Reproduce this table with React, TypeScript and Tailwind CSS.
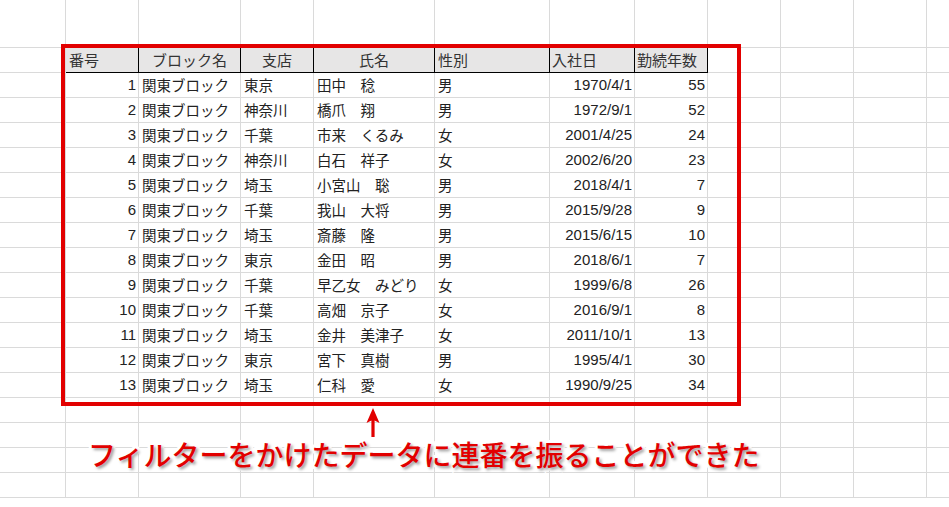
import React from 'react';

type Row = [number, string, string, string, string, string, number];

const rows: Row[] = [
  [1, '関東ブロック', '東京', '田中　稔', '男', '1970/4/1', 55],
  [2, '関東ブロック', '神奈川', '橋爪　翔', '男', '1972/9/1', 52],
  [3, '関東ブロック', '千葉', '市来　くるみ', '女', '2001/4/25', 24],
  [4, '関東ブロック', '神奈川', '白石　祥子', '女', '2002/6/20', 23],
  [5, '関東ブロック', '埼玉', '小宮山　聡', '男', '2018/4/1', 7],
  [6, '関東ブロック', '千葉', '我山　大将', '男', '2015/9/28', 9],
  [7, '関東ブロック', '埼玉', '斎藤　隆', '男', '2015/6/15', 10],
  [8, '関東ブロック', '東京', '金田　昭', '男', '2018/6/1', 7],
  [9, '関東ブロック', '千葉', '早乙女　みどり', '女', '1999/6/8', 26],
  [10, '関東ブロック', '千葉', '高畑　京子', '女', '2016/9/1', 8],
  [11, '関東ブロック', '埼玉', '金井　美津子', '女', '2011/10/1', 13],
  [12, '関東ブロック', '東京', '宮下　真樹', '男', '1995/4/1', 30],
  [13, '関東ブロック', '埼玉', '仁科　愛', '女', '1990/9/25', 34],
];

const headers = [
  { label: '番号', align: 'justify-start pl-[3px]' },
  { label: 'ブロック名', align: 'justify-center' },
  { label: '支店', align: 'justify-center' },
  { label: '氏名', align: 'justify-center' },
  { label: '性別', align: 'justify-start pl-[3px]' },
  { label: '入社日', align: 'justify-start pl-[2px]' },
  { label: '勤続年数', align: 'justify-start pl-[2px]' },
];

// right-aligned columns: 番号, 入社日, 勤続年数
const rightCols = [0, 5, 6];

const TOTAL_ROWS = 19;
const TOTAL_COLS = 12;

const Cell: React.FC<{ className?: string; children?: React.ReactNode }> = ({ className = '', children }) => (
  <div className={`flex items-center border-b border-r border-[#dadada] overflow-hidden whitespace-nowrap ${className}`}>
    {children}
  </div>
);

export default function App() {
  const cells: React.ReactNode[] = [];

  for (let r = 0; r < TOTAL_ROWS; r++) {
    for (let c = 0; c < TOTAL_COLS; c++) {
      const key = `${r}-${c}`;
      const inTable = c >= 1 && c <= 7;

      if (r === 1 && inTable) {
        const h = headers[c - 1];
        cells.push(
          <Cell key={key} className={`bg-[#e7e6e6] !border-r-black !border-b-black text-[#333] text-[15px] ${h.align}`}>
            {h.label}
          </Cell>
        );
      } else if (r >= 2 && r <= 14 && inTable) {
        const row = rows[r - 2];
        const v = row[c - 1];
        const right = rightCols.includes(c - 1);
        cells.push(
          <Cell
            key={key}
            className={right ? 'justify-end pr-[2px] font-["Liberation_Sans","Noto_Sans_CJK_JP",sans-serif] text-[15px]' : 'justify-start pl-[3px]'}
          >
            {v}
          </Cell>
        );
      } else {
        cells.push(<Cell key={key} />);
      }
    }
  }

  return (
    <div className="relative w-[949px] h-[507px] overflow-hidden bg-white font-['Noto_Sans_CJK_JP',sans-serif] text-[14.5px] text-[#222]">
      <div className="grid grid-cols-[66px_73px_102px_73px_121px_115px_85px_73px_73px_73px_73px_73px] grid-rows-[48px] auto-rows-[25px]">
        {cells}
      </div>

      {/* red frame around the filtered table */}
      <div className="absolute left-[61px] top-[44px] w-[680px] h-[362px] border-4 border-[#e20000]" />

      {/* arrow */}
      <svg className="absolute left-[366px] top-[407px]" width="14" height="31" viewBox="0 0 14 31">
        <path d="M7 1 L13.5 16 L8.6 13.5 L8.6 30 L5.4 30 L5.4 13.5 L0.5 16 Z" fill="#e20000" />
      </svg>

      {/* annotation */}
      <div className="absolute left-[88px] top-[440px] text-[28px] leading-none font-medium text-[#e20000] whitespace-nowrap [paint-order:stroke_fill] [-webkit-text-stroke:6px_white] [text-shadow:2px_2px_3px_rgba(0,0,0,0.4)]">
        フィルターをかけたデータに連番を振ることができた
      </div>
    </div>
  );
}
